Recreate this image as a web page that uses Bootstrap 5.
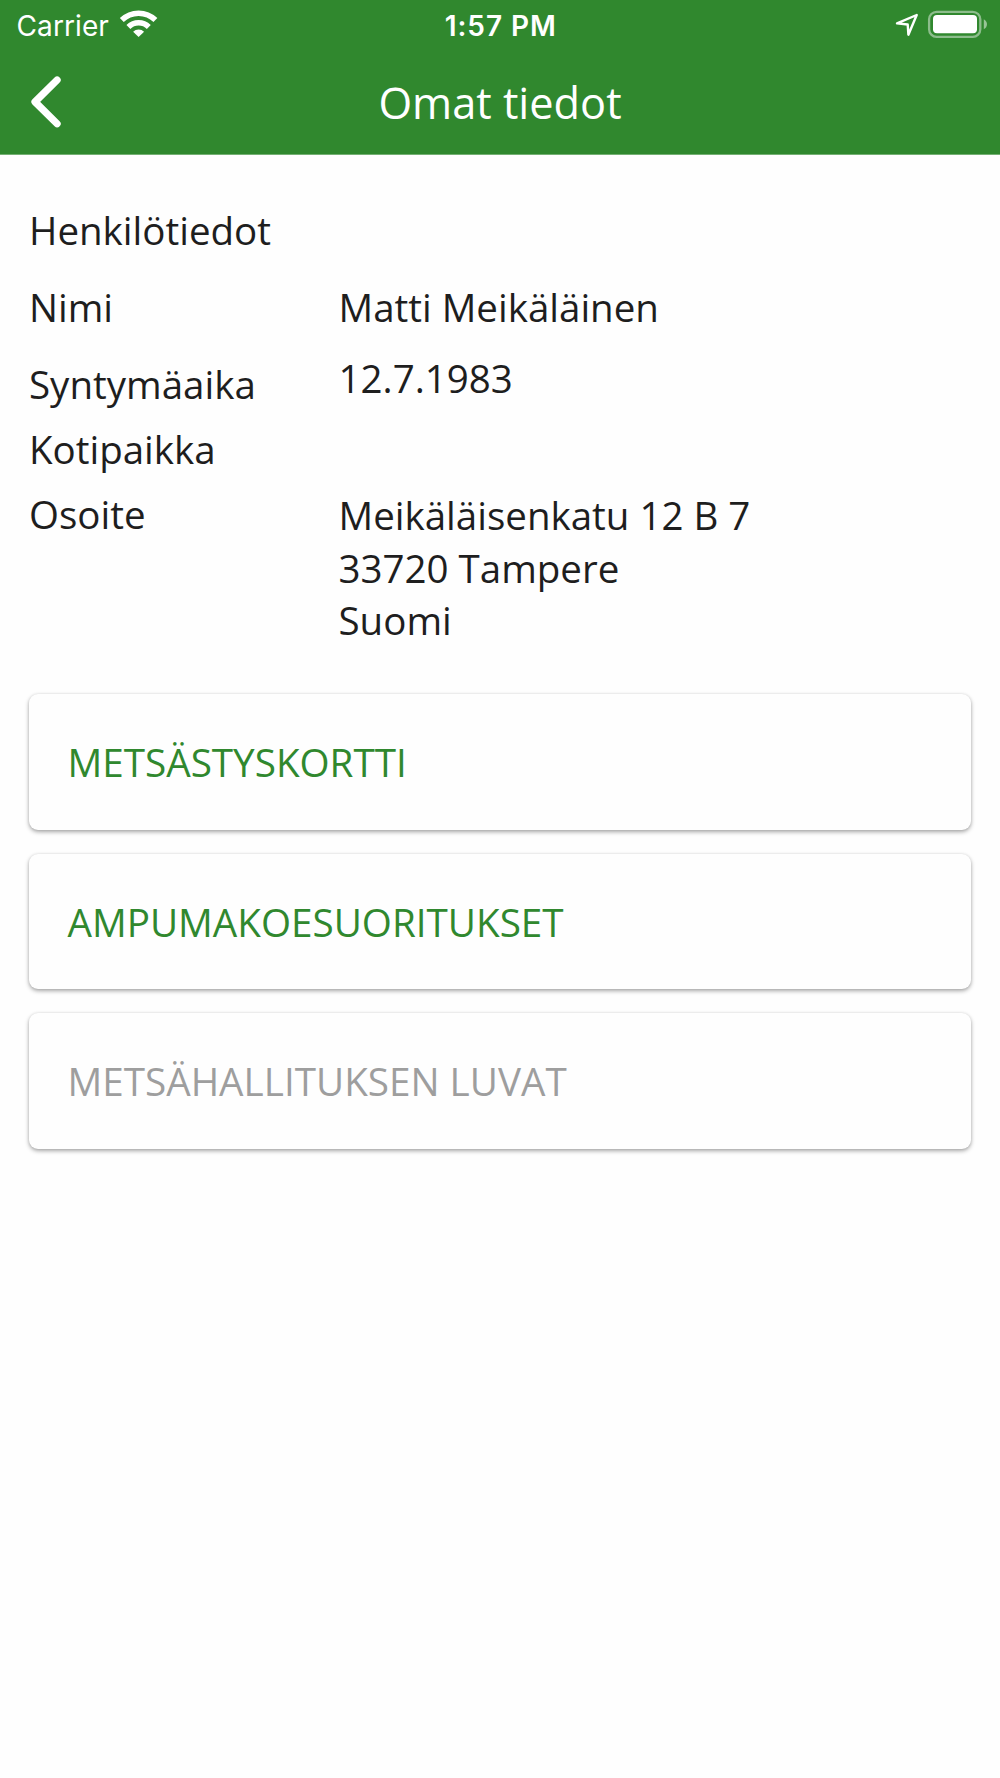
<!DOCTYPE html>
<html lang="fi">
<head>
<meta charset="utf-8">
<meta name="viewport" content="width=device-width, initial-scale=1">
<title>Omat tiedot</title>
<link href="https://cdn.jsdelivr.net/npm/bootstrap@5.3.0/dist/css/bootstrap.min.css" rel="stylesheet">
<style>
body{font-family:"Open Sans",sans-serif;font-size:38.5px;line-height:52px;color:#1e1e1e;background:#fefefe;min-height:1778px}
.app-head{background:#30882e;height:155px;border-bottom:1px solid #74b073;color:#fff}
.status-bar{height:50px;font-family:Inter,sans-serif;font-size:28px;line-height:48px;padding:0 12px 0 16.5px}
.carrier{width:92.5px;letter-spacing:.1px;margin-right:9px;padding-top:2px}
.clock{letter-spacing:.95px;padding:2px 3px 0 0}
.title-bar{height:104px;font-size:43.3px;padding:0 29px}
.title-text{padding-top:2px}
.back{display:block;background:none;border:0;padding:0;line-height:0;color:inherit}
.side{flex:1 1 0}
.status-bar svg{flex:none;display:block}
.content{padding:48.5px 29px 0}
.label-col{width:309.5px;flex:none}
.r-title{height:77px}.r-name{height:72px}.r-birth{height:70.4px}.r-home{height:65.6px}.r-addr{height:206px}
.r-birth .label-col{padding-top:5.4px}
.r-birth .value-col{margin-top:-.6px}
.r-addr .value-col{padding-top:1px;line-height:52.3px}
.tile{height:135.5px;border:0;border-radius:9px;background:#fefefe;color:#30882e;font-size:38.65px;padding:0 38.5px;box-shadow:0 2px 4px rgba(0,0,0,.34),0 0 3px rgba(0,0,0,.08);text-align:left}
.tile:disabled{color:#9e9e9e;opacity:1}
.tiles{gap:24px}
</style>
</head>
<body>
<header class="app-head">
  <div class="status-bar d-flex align-items-center">
    <div class="side d-flex align-items-center"><span class="carrier">Carrier</span>
      <svg width="42" height="50" viewBox="118 0 42 50" fill="none" stroke="#fff" stroke-width="5.6" aria-label="Wi-Fi">
        <path d="M121.8 20.1a24 24 0 0 1 33.6 0"/>
        <path d="M128.4 26.9a14.6 14.6 0 0 1 20.4 0"/>
        <path d="M138.6 37l-5.5-5.3a7.8 7.8 0 0 1 11 0z" fill="#fff" stroke="none"/>
      </svg></div>
    <div class="clock fw-semibold">1:57 PM</div>
    <div class="side d-flex justify-content-end">
      <svg width="94" height="50" viewBox="894 0 94 50" fill="none" aria-label="Battery">
        <path d="M897 23.4L916.7 15L908.4 34.7L907.7 24.5Z" stroke="#fff" stroke-width="2.4" stroke-linejoin="round"/>
        <rect x="929.1" y="11.8" width="51.2" height="25" rx="7.5" stroke="#fff" stroke-opacity=".45" stroke-width="2.3"/>
        <rect x="933" y="15" width="44" height="18.2" rx="4" fill="#fff"/>
        <path d="M983.8 19.3c4.2 2 4.2 8 0 10z" fill="#fff" fill-opacity=".5"/>
      </svg></div>
  </div>
  <div class="title-bar d-flex align-items-center">
    <div class="side"><button class="back" aria-label="Takaisin"><svg width="34" height="56" viewBox="29 74 34 56" fill="none" stroke="#fff" stroke-width="7.2" stroke-linecap="round" stroke-linejoin="round"><path d="M57.1 80L35 101.9L57.1 123.7"/></svg></button></div>
    <span class="title-text">Omat tiedot</span>
    <div class="side"></div>
  </div>
</header>
<main class="content">
  <div class="r-title">Henkilötiedot</div>
  <div class="r-name d-flex"><div class="label-col">Nimi</div><div class="value-col">Matti Meikäläinen</div></div>
  <div class="r-birth d-flex"><div class="label-col">Syntymäaika</div><div class="value-col">12.7.1983</div></div>
  <div class="r-home d-flex"><div class="label-col">Kotipaikka</div></div>
  <div class="r-addr d-flex"><div class="label-col">Osoite</div><div class="value-col">Meikäläisenkatu 12 B 7<br>33720 Tampere<br>Suomi</div></div>
  <div class="tiles d-flex flex-column">
    <button class="tile">METSÄSTYSKORTTI</button>
    <button class="tile">AMPUMAKOESUORITUKSET</button>
    <button class="tile" disabled>METSÄHALLITUKSEN LUVAT</button>
  </div>
</main>
</body>
</html>
